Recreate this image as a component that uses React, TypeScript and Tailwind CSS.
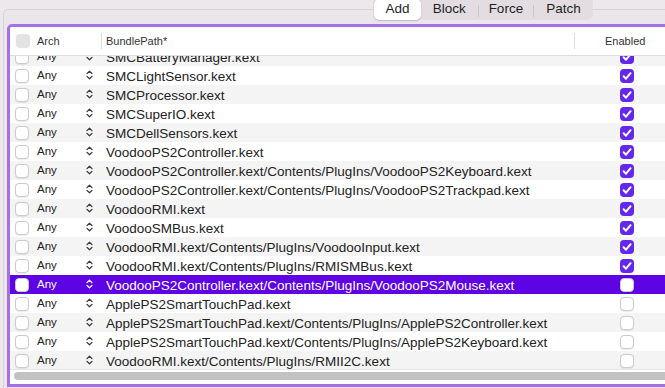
import React from "react";

const rows: string[] = [
  "SMCBatteryManager.kext",
  "SMCLightSensor.kext",
  "SMCProcessor.kext",
  "SMCSuperIO.kext",
  "SMCDellSensors.kext",
  "VoodooPS2Controller.kext",
  "VoodooPS2Controller.kext/Contents/PlugIns/VoodooPS2Keyboard.kext",
  "VoodooPS2Controller.kext/Contents/PlugIns/VoodooPS2Trackpad.kext",
  "VoodooRMI.kext",
  "VoodooSMBus.kext",
  "VoodooRMI.kext/Contents/PlugIns/VoodooInput.kext",
  "VoodooRMI.kext/Contents/PlugIns/RMISMBus.kext",
  "VoodooPS2Controller.kext/Contents/PlugIns/VoodooPS2Mouse.kext",
  "ApplePS2SmartTouchPad.kext",
  "ApplePS2SmartTouchPad.kext/Contents/PlugIns/ApplePS2Controller.kext",
  "ApplePS2SmartTouchPad.kext/Contents/PlugIns/ApplePS2Keyboard.kext",
  "VoodooRMI.kext/Contents/PlugIns/RMII2C.kext",
];

const SELECTED = 12;

function Chevrons({ light }: { light: boolean }) {
  return (
    <svg width="7" height="10" viewBox="0 0 7 10" fill="none">
      <path
        d="M1 3.6 L3.5 1.2 L6 3.6 M1 6.4 L3.5 8.8 L6 6.4"
        stroke={light ? "#ffffff" : "#3a3a3a"}
        strokeWidth="1.3"
        strokeLinecap="round"
        strokeLinejoin="round"
      />
    </svg>
  );
}

function Box({ checked }: { checked: boolean }) {
  if (checked) {
    return (
      <div className="w-[14px] h-[14px] rounded-[4px] bg-[#6427ee] flex items-center justify-center">
        <svg width="12" height="12" viewBox="0 0 12 12" fill="none">
          <path
            d="M2.6 6.3 L5 8.7 L9.6 3.2"
            stroke="#ffffff"
            strokeWidth="2"
            strokeLinecap="round"
            strokeLinejoin="round"
          />
        </svg>
      </div>
    );
  }
  return (
    <div className="w-[14px] h-[14px] rounded-[4px] bg-white border border-[#cbcbcb] shadow-[0_0.5px_1px_rgba(0,0,0,0.08)]" />
  );
}

export default function App() {
  return (
    <div className="relative w-[665px] h-[388px] overflow-hidden bg-[#ede8eb] font-['Liberation_Sans',Helvetica,Arial,sans-serif] text-[13px] text-[#222222]">
      <div className="pt-[9px] pl-[3px]">
        <div className="w-[700px] h-[400px] border border-[#d8d2d6] rounded-tl-[5px] bg-[#ebe6e9] pt-[14px] pl-[3px]">
          <div className="w-[690px] h-[363px] border-[3px] border-[#a66fea] rounded-tl-[5px] bg-white flex flex-col overflow-hidden">
            {/* header */}
            <div className="h-[29px] shrink-0 flex items-center border-b border-[#dedede] text-[11px] text-[#333333] bg-white relative z-10">
              <div className="w-[27px] pl-[6px] shrink-0">
                <div className="w-[14px] h-[14px] rounded-[4px] bg-[#e3e3e3]" />
              </div>
              <div className="w-[64px] shrink-0">Arch</div>
              <div className="w-px h-[16px] bg-[#dcdcdc] shrink-0" />
              <div className="w-[472px] pl-[4px] shrink-0">BundlePath*</div>
              <div className="w-px h-[16px] bg-[#dcdcdc] shrink-0" />
              <div className="pl-[30px]">Enabled</div>
            </div>
            {/* rows */}
            <div className="h-[313px] shrink-0 overflow-hidden">
              <div className="-mt-[9px]">
                {rows.map((r, i) => {
                  const sel = i === SELECTED;
                  const bg = sel ? "bg-[#5d03e4] text-white" : i % 2 === 0 ? "bg-[#f4f4f4]" : "bg-white";
                  return (
                    <div key={i} className={`h-[19px] flex items-center ${bg}`}>
                      <div className="w-[27px] pl-[5px] shrink-0">
                        <Box checked={false} />
                      </div>
                      <div className="w-[49px] shrink-0 text-[11.5px] leading-[14px] -mt-[2px]">Any</div>
                      <div className="w-[20px] shrink-0 flex -mt-[1px]">
                        <Chevrons light={sel} />
                      </div>
                      <div className="w-[468px] shrink-0 whitespace-nowrap overflow-hidden text-[13.5px] leading-[17px] pt-[1px]">{r}</div>
                      <div className="pl-[46px] shrink-0">
                        <Box checked={i <= 11} />
                      </div>
                    </div>
                  );
                })}
              </div>
            </div>
            {/* scrollbar area */}
            <div className="h-[13px] shrink-0 border-t border-[#e6e6e6] bg-white pl-[4px] pt-[2px]">
              <div className="w-[700px] h-[8px] rounded-full bg-[#c2c2c2]" />
            </div>
          </div>
        </div>
      </div>

      {/* segmented control overlapping the box border */}
      <div className="absolute left-[373px] top-[-3px] w-[220px] h-[23px] rounded-[6px] bg-[#e3dde1] flex items-center text-[13.5px] text-[#1f1f1f]">
        <div className="ml-[1px] w-[47px] h-[21px] mt-[1px] rounded-[5px] bg-white shadow-[0_0.5px_1.5px_rgba(0,0,0,0.2)] flex items-center justify-center pt-[1px]">
          Add
        </div>
        <div className="w-[57px] flex items-center justify-center pt-[2px]">Block</div>
        <div className="w-px h-[12px] bg-[#cdc7cb] mt-[4px]" />
        <div className="w-[55px] flex items-center justify-center pt-[2px]">Force</div>
        <div className="w-px h-[12px] bg-[#cdc7cb] mt-[4px]" />
        <div className="w-[59px] flex items-center justify-center pt-[2px]">Patch</div>
      </div>
    </div>
  );
}
